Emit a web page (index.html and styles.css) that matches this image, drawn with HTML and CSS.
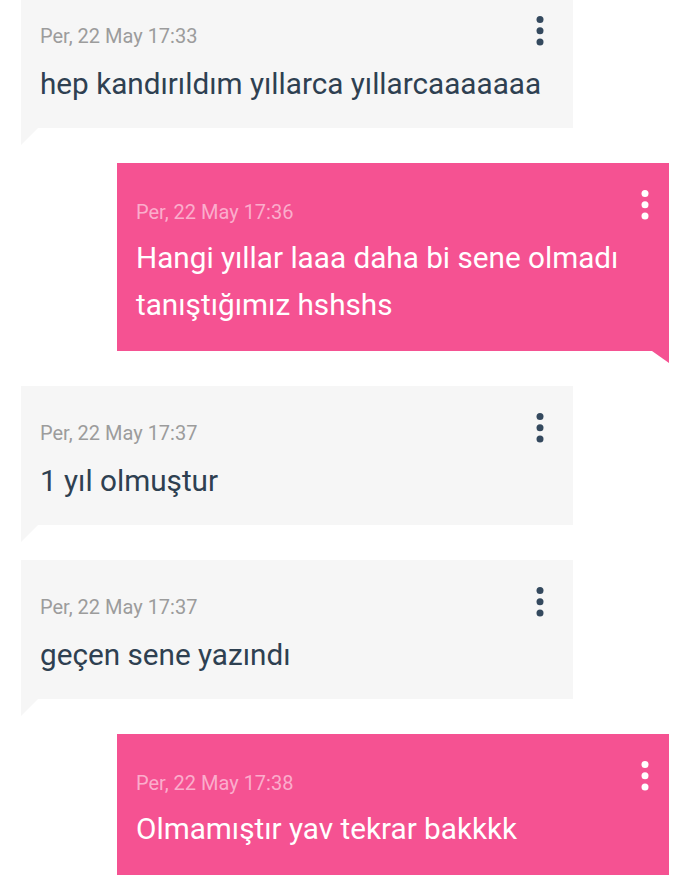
FILE: index.html
```html
<!DOCTYPE html>
<html lang="tr">
<head>
    <meta charset="UTF-8">
    <meta name="viewport" content="width=device-width, initial-scale=1.0">
    <title>Mesajlar</title>
    <link rel="stylesheet" href="styles.css">
</head>
<body>
    <div class="thread">
        <div class="msg msg-in">
            <div class="msg-head">
                <span class="msg-time">Per, 22 May 17:33</span>
                <svg class="msg-menu" viewBox="0 0 8 30"><circle cx="4" cy="3.5" r="3.5"/><circle cx="4" cy="14.8" r="3.5"/><circle cx="4" cy="26.1" r="3.5"/></svg>
            </div>
            <p class="msg-text">hep kandırıldım yıllarca yıllarcaaaaaaa</p>
        </div>

        <div class="msg msg-out">
            <div class="msg-head">
                <span class="msg-time">Per, 22 May 17:36</span>
                <svg class="msg-menu" viewBox="0 0 8 30"><circle cx="4" cy="3.5" r="3.5"/><circle cx="4" cy="14.8" r="3.5"/><circle cx="4" cy="26.1" r="3.5"/></svg>
            </div>
            <p class="msg-text">Hangi yıllar laaa daha bi sene olmadı tanıştığımız hshshs</p>
        </div>

        <div class="msg msg-in">
            <div class="msg-head">
                <span class="msg-time">Per, 22 May 17:37</span>
                <svg class="msg-menu" viewBox="0 0 8 30"><circle cx="4" cy="3.5" r="3.5"/><circle cx="4" cy="14.8" r="3.5"/><circle cx="4" cy="26.1" r="3.5"/></svg>
            </div>
            <p class="msg-text">1 yıl olmuştur</p>
        </div>

        <div class="msg msg-in">
            <div class="msg-head">
                <span class="msg-time">Per, 22 May 17:37</span>
                <svg class="msg-menu" viewBox="0 0 8 30"><circle cx="4" cy="3.5" r="3.5"/><circle cx="4" cy="14.8" r="3.5"/><circle cx="4" cy="26.1" r="3.5"/></svg>
            </div>
            <p class="msg-text">geçen sene yazındı</p>
        </div>

        <div class="msg msg-out">
            <div class="msg-head">
                <span class="msg-time">Per, 22 May 17:38</span>
                <svg class="msg-menu" viewBox="0 0 8 30"><circle cx="4" cy="3.5" r="3.5"/><circle cx="4" cy="14.8" r="3.5"/><circle cx="4" cy="26.1" r="3.5"/></svg>
            </div>
            <p class="msg-text">Olmamıştır yav tekrar bakkkk</p>
        </div>
    </div>
</body>
</html>
```

FILE: styles.css
```css
body {
    margin: 0;
    background: #ffffff;
    font-family: Roboto, "Noto Sans", Arial, sans-serif;
    overflow: hidden;
}
.thread {
    display: flex;
    flex-direction: column;
    gap: 35px;
    padding: 0 21px;
    margin-top: -11px;
}
.msg {
    position: relative;
    width: 552px;
    box-sizing: border-box;
    padding: 35px 29px 21px 19px;
}
.msg::after {
    content: "";
    position: absolute;
    top: 100%;
    width: 17px;
}
.msg-in {
    background-color: #f6f6f6;
    color: #2e4051;
}
.msg-in::after {
    left: 0;
    height: 17px;
    background-color: #f6f6f6;
    clip-path: polygon(0 0, 100% 0, 0 100%);
}
.msg-out {
    align-self: flex-end;
    background-color: #f55292;
    color: #ffffff;
    padding-top: 37px;
    padding-right: 20px;
    padding-bottom: 23px;
}
.msg-out::after {
    right: 0;
    height: 12px;
    background-color: #f55292;
    clip-path: polygon(0 0, 100% 0, 100% 100%);
}
.msg-head {
    display: flex;
    justify-content: space-between;
    align-items: flex-start;
    height: 24px;
}
.msg-time {
    font-size: 20px;
    line-height: 24px;
    color: #9c9c9c;
}
.msg-out .msg-time {
    color: #fbadcc;
}
.msg-menu {
    width: 8px;
    height: 30px;
    margin-top: -8px;
    fill: #34495e;
}
.msg-out .msg-menu {
    fill: #ffffff;
    margin-top: -10px;
}
.msg-text {
    margin: 12px 0 0;
    font-size: 29.7px;
    line-height: 47px;
}
.msg-out .msg-text {
    margin-top: 10px;
}
```
